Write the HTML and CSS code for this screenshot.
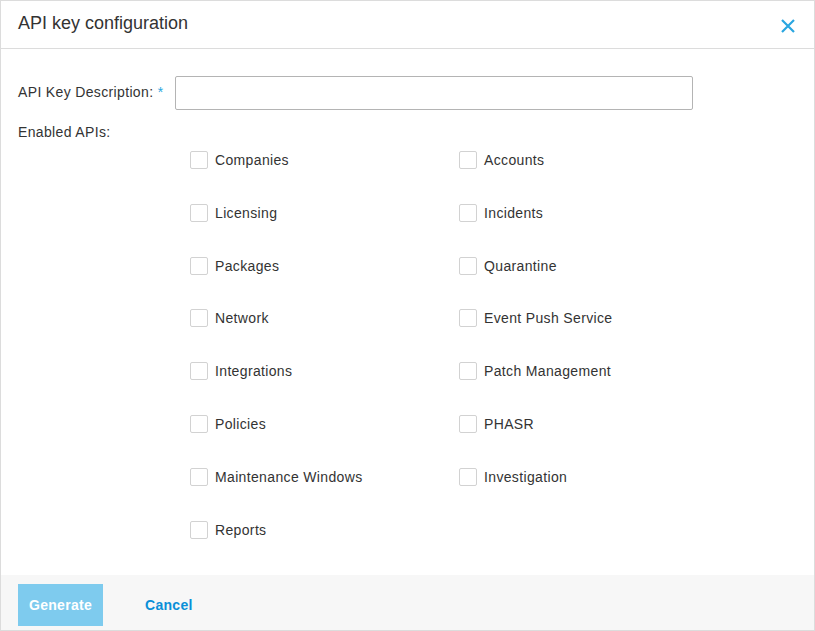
FILE: index.html
```html
<!DOCTYPE html>
<html lang="en">
<head>
  <meta charset="UTF-8">
  <title>API key configuration</title>
  <link rel="stylesheet" href="styles.css">
</head>
<body>
  <div class="modal">
    <div class="modal-header">
      <div class="modal-title">API key configuration</div>
      <button class="close-btn" aria-label="Close">
        <svg width="16" height="16" viewBox="0 0 16 16">
          <path d="M2 2 L14 14 M14 2 L2 14" stroke="#2aa6e0" stroke-width="2.2" stroke-linecap="butt" fill="none"/>
        </svg>
      </button>
    </div>

    <div class="modal-body">
      <div class="form-row">
        <label class="form-label">API Key Description: <span class="required">*</span></label>
        <input type="text" class="text-input">
      </div>
      <div class="section-label">Enabled APIs:</div>

      <div class="api-grid">
        <label class="api-item"><span class="box"></span>Companies</label>
        <label class="api-item"><span class="box"></span>Accounts</label>
        <label class="api-item"><span class="box"></span>Licensing</label>
        <label class="api-item"><span class="box"></span>Incidents</label>
        <label class="api-item"><span class="box"></span>Packages</label>
        <label class="api-item"><span class="box"></span>Quarantine</label>
        <label class="api-item"><span class="box"></span>Network</label>
        <label class="api-item"><span class="box"></span>Event Push Service</label>
        <label class="api-item"><span class="box"></span>Integrations</label>
        <label class="api-item"><span class="box"></span>Patch Management</label>
        <label class="api-item"><span class="box"></span>Policies</label>
        <label class="api-item"><span class="box"></span>PHASR</label>
        <label class="api-item"><span class="box"></span>Maintenance Windows</label>
        <label class="api-item"><span class="box"></span>Investigation</label>
        <label class="api-item"><span class="box"></span>Reports</label>
      </div>
    </div>

    <div class="modal-footer">
      <button class="btn-generate">Generate</button>
      <button class="btn-cancel">Cancel</button>
    </div>
  </div>
</body>
</html>
```

FILE: styles.css
```css
* {
  margin: 0;
  padding: 0;
  box-sizing: border-box;
}

body {
  font-family: "Liberation Sans", Arial, sans-serif;
  font-size: 14px;
  letter-spacing: 0.35px;
  color: #333;
  background: #fff;
}

.modal {
  width: 815px;
  height: 631px;
  border: 1px solid #dcdcdc;
  display: flex;
  flex-direction: column;
  background: #fff;
}

.modal-header {
  height: 48px;
  border-bottom: 1px solid #dcdcdc;
  display: flex;
  align-items: center;
  justify-content: space-between;
  padding: 0 18px 2px 17px;
}

.modal-title {
  font-size: 18px;
  letter-spacing: 0;
  color: #333;
}

.close-btn {
  background: none;
  border: none;
  cursor: pointer;
  width: 16px;
  height: 16px;
  margin-top: 4px;
  display: flex;
}

.modal-body {
  flex: 1;
  padding: 27px 17px 0 17px;
}

.form-row {
  display: flex;
  align-items: center;
}

.form-label {
  width: 157px;
  line-height: 20px;
  margin-top: -2px;
}

.required {
  color: #2aa6e0;
}

.text-input {
  width: 518px;
  height: 34px;
  border: 1px solid #b4b4b4;
  border-radius: 2px;
  font: inherit;
  padding: 0 8px;
}

.section-label {
  margin-top: 12px;
  line-height: 20px;
}

.api-grid {
  display: grid;
  grid-template-columns: 269px 269px;
  row-gap: 32.8px;
  margin-top: 8px;
  padding-left: 172px;
}

.api-item {
  display: flex;
  align-items: center;
  height: 20px;
  cursor: pointer;
}

.box {
  width: 18px;
  height: 18px;
  border: 1px solid #d2d2d2;
  border-radius: 2px;
  margin-right: 7px;
  background: #fff;
}

.modal-footer {
  height: 55px;
  background: #f7f7f7;
  display: flex;
  align-items: flex-start;
  padding: 9px 17px 0 17px;
}

.btn-generate {
  width: 85px;
  height: 42px;
  border: none;
  background: #7ecbee;
  color: #fff;
  font: bold 14px "Liberation Sans", Arial, sans-serif;
  letter-spacing: 0.3px;
  cursor: pointer;
}

.btn-cancel {
  height: 42px;
  border: none;
  background: none;
  color: #0b8fd8;
  font: bold 14px "Liberation Sans", Arial, sans-serif;
  letter-spacing: 0.3px;
  margin-left: 42px;
  cursor: pointer;
}
```
